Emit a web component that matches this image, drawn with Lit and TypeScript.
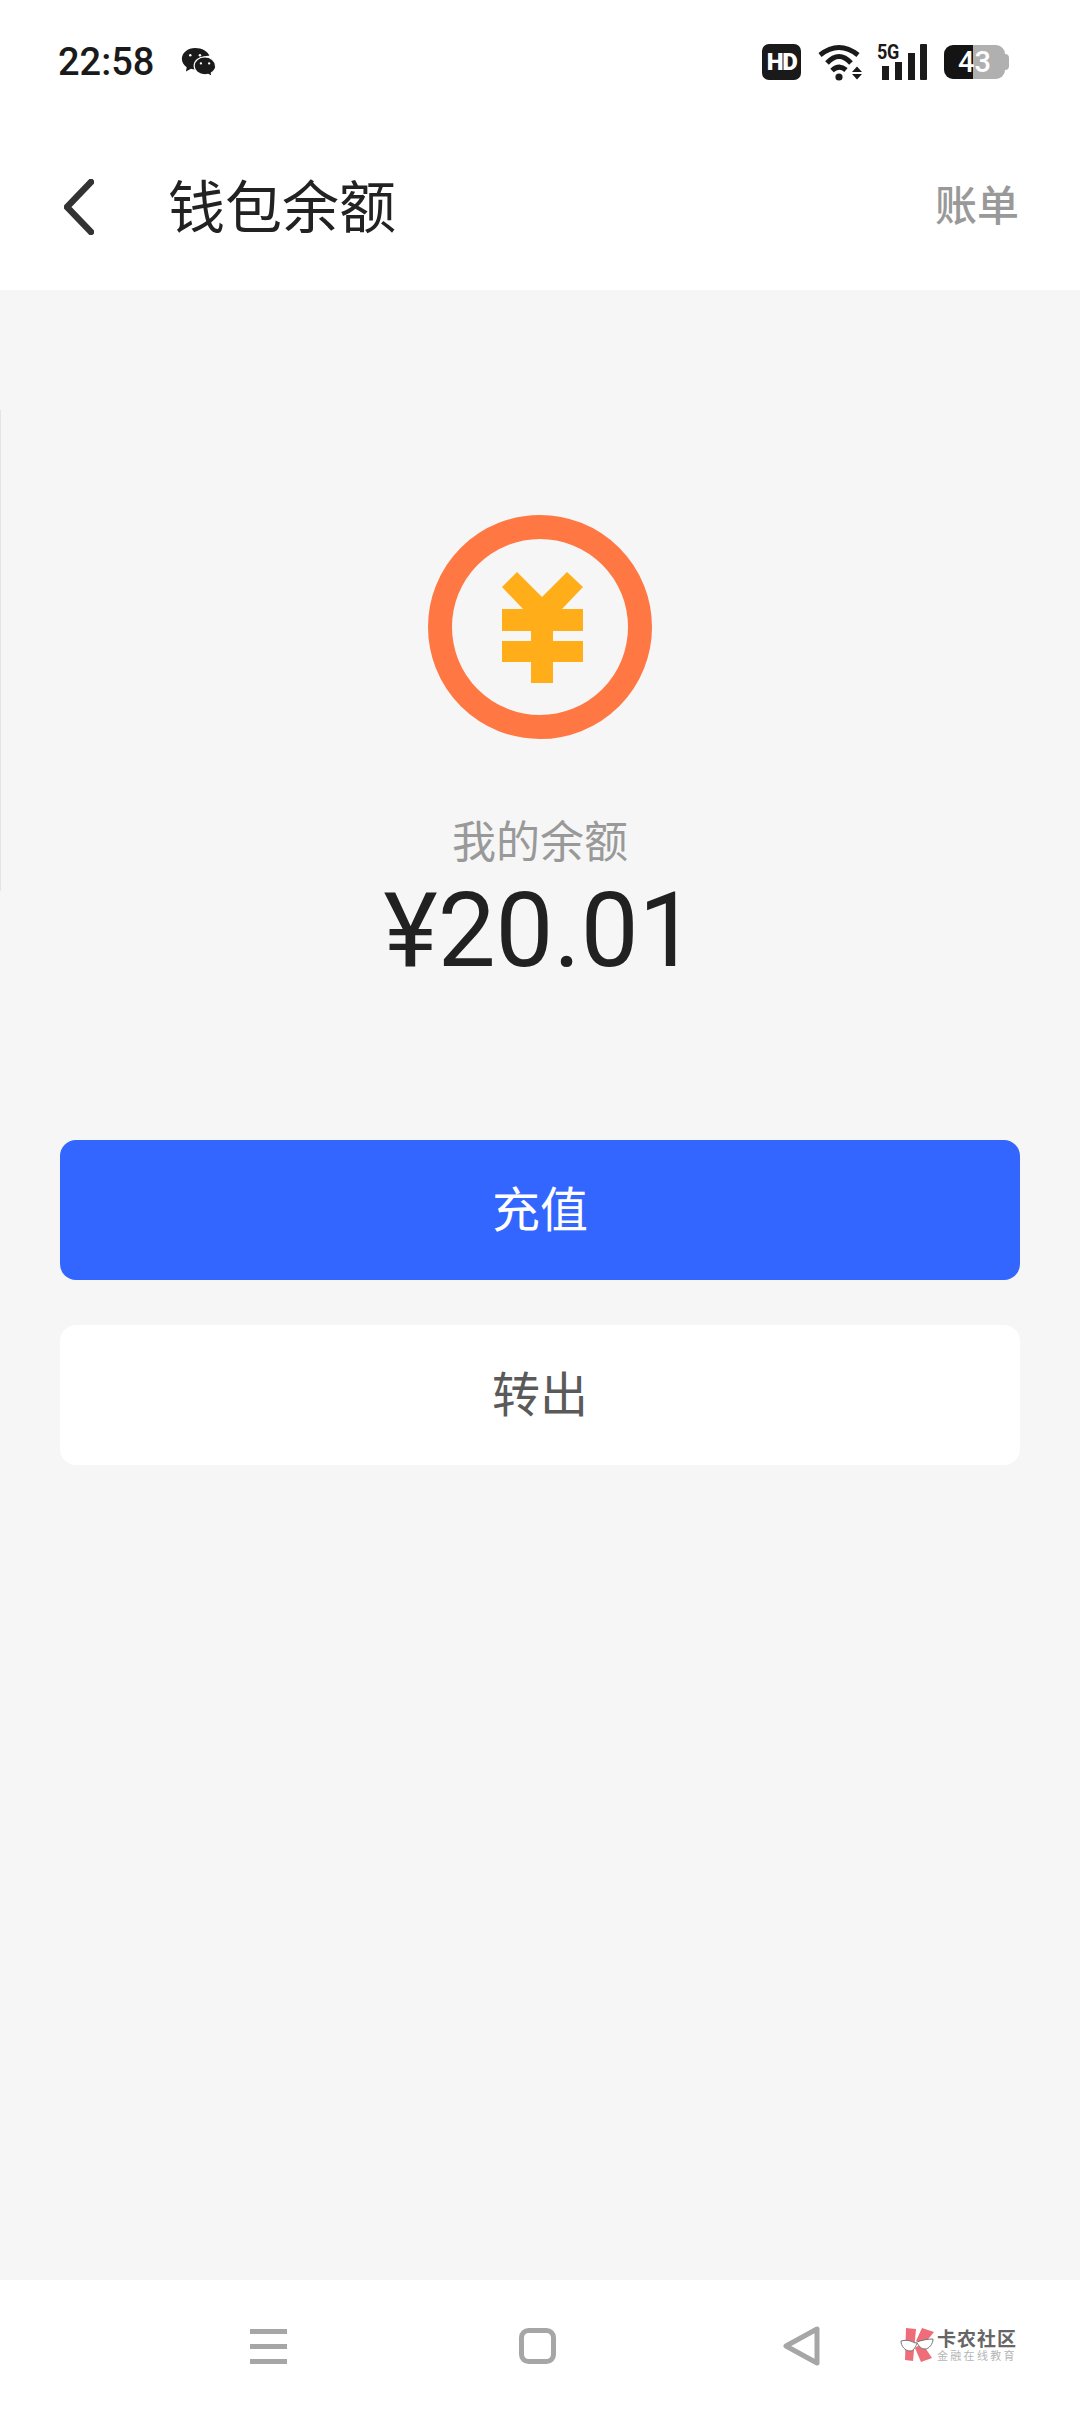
import { LitElement, html, css } from 'lit'
import { customElement } from 'lit/decorators.js'

const wechat = html`<svg class="wechat" width="35" height="30" viewBox="0 0 36 31">
  <path d="M14.5 1C7 1 .8 6 .8 12.200c0 3.500 2 6.600 5 8.700L5 25.400l5.200-2.800c1.400.4 2.900.6 4.300.6h2c-.4-1.100-.6-2.200-.6-3.400 0-6.200 5.500-10.800 12.400-10.800h1C27.700 4.500 21.700 1 14.500 1z" fill="#1a1a1a"/>
  <path d="M35.500 19.500c0-5.200-5-9.300-11-9.300S13.500 14.300 13.500 19.500s5 9.300 11 9.300c1.200 0 2.400-.2 3.500-.5l4 2.200-.8-3.600c2.900-1.900 4.800-4.700 4.800-7.400z" fill="#1a1a1a" stroke="#fff" stroke-width="1.200"/>
  <circle cx="9.500" cy="8.500" r="1.300" fill="#fff"/><circle cx="19.500" cy="8.500" r="1.300" fill="#fff"/>
  <circle cx="20.500" cy="17" r="1.200" fill="#fff"/><circle cx="29" cy="17" r="1.200" fill="#fff"/>
</svg>`

const wifi = html`<svg width="46" height="37" viewBox="0 0 46 37" fill="none" stroke="#1a1a1a" stroke-width="5">
  <path d="M3 11Q22-4 41 11"/>
  <path d="M10 19Q22 6 34 19"/>
  <path d="M15 26.500Q22 20 29 26"/>
  <circle cx="22" cy="33" r="3.600" fill="#1a1a1a" stroke="none"/>
  <path d="M35 28l5-5.500 5 5.500zM35 30l5 5.500 5-5.500z" fill="#1a1a1a" stroke="none"/>
</svg>`

const signal = html`<svg width="50" height="36" viewBox="0 0 50 36" fill="#1a1a1a">
  <rect x="5" y="22" width="7" height="14"/>
  <rect x="18" y="18" width="7" height="18"/>
  <rect x="31" y="9" width="7" height="27"/>
  <rect x="43" y="0" width="7" height="36" rx="1"/>
</svg>`

// yuan mark traced from the reference, not a font glyph
const coin = html`<svg width="224" height="224" viewBox="0 0 224 224">
  <circle cx="112" cy="112" r="100" fill="none" stroke="#ff7843" stroke-width="24"/>
  <path fill="#ffae19" d="M74 72L89 57l25 25 25-25 16 15-21 22h21v22h-30v10h30v21h-30v21h-22v-21H74v-21h29v-10H74V94h21z"/>
</svg>`

const mark = html`<svg width="35" height="36" viewBox="0 0 35 36">
  <path d="M6 1l10 1-3 32-8-1z" fill="#ee6d78"/>
  <path d="M22 1l12 4-9 11-9-2z" fill="#ee6d78"/>
  <path d="M15 21l7-5 10 15-11 4z" fill="#ee6d78"/>
  <path d="M1 14c4-1 8-1 12 1l2 1 2-1c5-2 11-3 16-3 0 5-4 10-8 10-4 0-6-3-8-6-1 3-3 8-7 8-5 0-9-5-9-10z" fill="#fff" stroke="#777" stroke-width="1"/>
</svg>`

@customElement('app-root')
export class AppRoot extends LitElement {
  static styles = css`
    :host {
      display: block;
      width: 1080px;
      height: 2412px;
      position: relative;
      font-family: Roboto, "Noto Sans CJK SC", sans-serif;
    }
    .page {
      display: flex;
      flex-direction: column;
      height: 100%;
      background: #f6f6f6;
    }
    .top {
      background: #fff;
      height: 290px;
      flex: none;
    }
    .status {
      display: flex;
      align-items: center;
      justify-content: space-between;
      height: 124px;
      padding: 0 71px 0 58px;
    }
    .status-left,
    .status-right {
      display: flex;
      align-items: center;
    }
    .time {
      font-size: 38px;
      font-weight: 500;
      color: #1a1a1a;
    }
    .wechat {
      margin-left: 27px;
    }
    .hd {
      width: 39px;
      height: 36px;
      border-radius: 7px;
      background: #1a1a1a;
      color: #fff;
      font: 900 24px/36px Roboto, sans-serif;
      text-align: center;
      letter-spacing: -1.500px;
    }
    .wifi {
      margin-left: 16px;
      display: flex;
    }
    .cell {
      margin-left: 14px;
      position: relative;
      display: flex;
    }
    .five-g {
      position: absolute;
      left: 0;
      top: -2px;
      font: 700 20px/20px Roboto, sans-serif;
      letter-spacing: -0.5px;
      color: #1a1a1a;
      transform: scaleX(0.9);
      transform-origin: left top;
    }
    .battery {
      margin-left: 17px;
      width: 65px;
      height: 34px;
      display: flex;
      align-items: center;
      position: relative;
    }
    .battery-body {
      width: 61px;
      height: 34px;
      border-radius: 9px;
      display: flex;
      overflow: hidden;
    }
    .battery-fill {
      width: 29px;
      background: #141414;
    }
    .battery-rest {
      flex: 1;
      background: #b0b0b0;
    }
    .battery-nub {
      width: 4px;
      height: 16px;
      background: #b0b0b0;
      border-radius: 0 4px 4px 0;
    }
    .battery-num {
      position: absolute;
      left: 14px;
      top: 0;
      font: 500 29px/34px Roboto, sans-serif;
      color: #fff;
    }
    .bar {
      display: flex;
      align-items: center;
      height: 166px;
      padding: 0 61px 0 64px;
    }
    .back {
      display: block;
      width: 30px;
      height: 56px;
    }
    .title {
      margin-left: 74px;
      padding-top: 2px;
      flex: 1;
      font-size: 57px;
      line-height: 1;
      color: #222;
    }
    .bill {
      font-size: 42px;
      line-height: 1;
      font-weight: 500;
      color: #999;
    }
    .content {
      flex: 1;
      display: flex;
      flex-direction: column;
      align-items: center;
      padding-top: 225px;
    }
    .coin {
      display: block;
      width: 224px;
      height: 224px;
    }
    .label {
      margin-top: 77px;
      font-size: 44px;
      line-height: 55px;
      color: #999;
    }
    .amount {
      font-size: 103px;
      line-height: 120px;
      color: #212121;
    }
    .actions {
      align-self: stretch;
      display: flex;
      flex-direction: column;
      gap: 45px;
      padding: 0 60px;
      margin-top: 149px;
    }
    .btn {
      box-sizing: border-box;
      height: 140px;
      padding-top: 2px;
      border-radius: 16px;
      display: flex;
      align-items: center;
      justify-content: center;
      font-size: 48px;
      line-height: 1;
    }
    .btn.primary {
      background: #3366ff;
      color: #fff;
    }
    .btn.plain {
      background: #fff;
      color: #5a5a5a;
    }
    .nav {
      background: #fff;
      height: 132px;
      flex: none;
      display: flex;
      align-items: center;
      padding-left: 250px;
    }
    .nav svg {
      display: block;
    }
    .nav-home {
      margin-left: 232px;
    }
    .nav-back {
      margin-left: 227px;
    }
    .sliver {
      position: absolute;
      left: 0;
      top: 410px;
      width: 1px;
      height: 481px;
      background: #e4e4e4;
    }
    .logo {
      position: absolute;
      left: 900px;
      top: 2327px;
      display: flex;
      align-items: center;
      gap: 2px;
    }
    .logo-text {
      display: flex;
      flex-direction: column;
      font-family: "Noto Sans CJK SC", sans-serif;
    }
    .logo-name {
      font-size: 19px;
      line-height: 20px;
      font-weight: 700;
      letter-spacing: 1px;
      color: #666;
    }
    .logo-sub {
      font-size: 11px;
      line-height: 14px;
      color: #b5b5b5;
      letter-spacing: 2.300px;
      white-space: nowrap;
    }
  `

  render() {
    return html`
      <div class="page">
        <div class="top">
          <div class="status">
            <div class="status-left">
              <span class="time">22:58</span>
              ${wechat}
            </div>
            <div class="status-right">
              <div class="hd">HD</div>
              <div class="wifi">${wifi}</div>
              <div class="cell">
                <span class="five-g">5G</span>
                ${signal}
              </div>
              <div class="battery">
                <div class="battery-body">
                  <div class="battery-fill"></div>
                  <div class="battery-rest"></div>
                </div>
                <div class="battery-nub"></div>
                <span class="battery-num">43</span>
              </div>
            </div>
          </div>
          <div class="bar">
            <svg class="back" viewBox="0 0 30 56" fill="none" stroke="#333" stroke-width="6.500" stroke-linecap="round" stroke-linejoin="round">
              <path d="M27 3L3 28l24 25"/>
            </svg>
            <div class="title">钱包余额</div>
            <div class="bill">账单</div>
          </div>
        </div>
        <div class="content">
          <div class="coin">${coin}</div>
          <div class="label">我的余额</div>
          <div class="amount">¥20.01</div>
          <div class="actions">
            <div class="btn primary">充值</div>
            <div class="btn plain">转出</div>
          </div>
        </div>
        <div class="nav">
          <svg width="37" height="35" viewBox="0 0 37 35" fill="#a6a6a6">
            <rect width="37" height="5"/><rect y="15" width="37" height="5"/><rect y="30" width="37" height="5"/>
          </svg>
          <svg class="nav-home" width="37" height="36" viewBox="0 0 37 36" fill="none" stroke="#a6a6a6" stroke-width="5">
            <rect x="2.500" y="2.500" width="32" height="31" rx="7"/>
          </svg>
          <svg class="nav-back" width="37" height="40" viewBox="0 0 37 40" fill="none" stroke="#a6a6a6" stroke-width="5" stroke-linejoin="round">
            <path d="M34 3v34L3 20z"/>
          </svg>
        </div>
      </div>
      <div class="sliver"></div>
      <div class="logo">
        ${mark}
        <div class="logo-text">
          <span class="logo-name">卡农社区</span>
          <span class="logo-sub">金融在线教育</span>
        </div>
      </div>
    `
  }
}
